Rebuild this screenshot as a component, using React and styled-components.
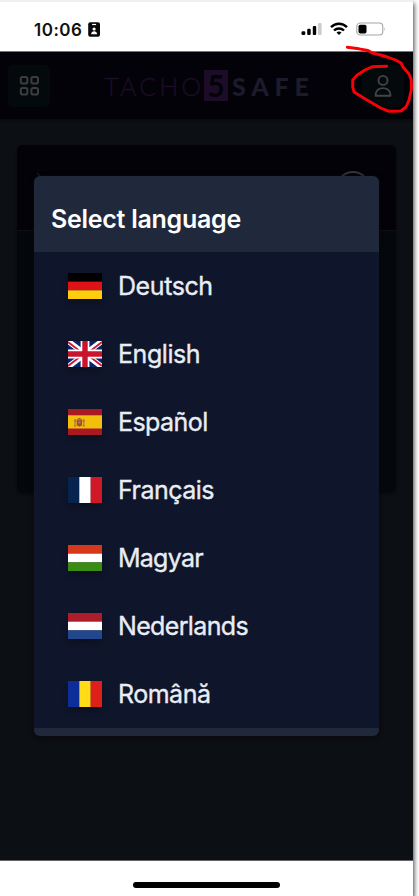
import React from "react";
import styled, { createGlobalStyle } from "styled-components";

const GlobalStyle = createGlobalStyle`
  * { box-sizing: border-box; }
  body { margin: 0; background: #fff; font-family: Inter, "Liberation Sans", sans-serif; overflow: hidden; }
  svg { display: block; }
`;

const Page = styled.div`
  position: relative;
  width: 419px;
  height: 896px;
  background: #fff;
  overflow: hidden;
`;

const Phone = styled.div`
  display: flex;
  flex-direction: column;
  width: 413px;
  height: 896px;
  background: #fff;
  overflow: hidden;
  box-shadow: 1px 3px 5px rgba(0, 0, 0, 0.75);
`;

const StatusBar = styled.div`
  display: flex;
  align-items: flex-start;
  flex: none;
  height: 52px;
  padding: 20px 27px 0 34px;
  border-top: 2px solid #f0f0f0;
  border-bottom: 1px solid #77777b;
`;

const Clock = styled.span`
  width: 54px;
  font-size: 17px;
  font-weight: 600;
  line-height: 16px;
  letter-spacing: 0.5px;
  color: #111;
  white-space: nowrap;
`;

const Indicators = styled.div`
  display: flex;
  align-items: flex-start;
  gap: 8px;
  margin-left: auto;
`;

const Header = styled.header`
  display: flex;
  align-items: center;
  justify-content: space-between;
  flex: none;
  height: 67px;
  padding: 0 9px 0 8px;
  background: #030208;
`;

const IconButton = styled.div`
  display: flex;
  align-items: center;
  justify-content: center;
  width: 42px;
  height: 42px;
  border-radius: 5px;
  background: #04090c;
`;

const Logo = styled.div`
  display: flex;
  align-items: center;
  width: 208px;
  height: 32px;
  margin-right: -4px;
  font-family: Lato, sans-serif;
  font-size: 25px;
  line-height: 32px;
`;

const LogoThin = styled.span`
  flex: none;
  width: 100px;
  font-weight: 300;
  letter-spacing: 3.2px;
  color: #1c0c26;
  -webkit-text-stroke: 0.4px #1c0c26;
  white-space: nowrap;
`;

const LogoDigit = styled.span`
  flex: none;
  width: 24px;
  height: 31px;
  background: #1d0c28;
  color: #030208;
  font-size: 30px;
  font-weight: 700;
  line-height: 31px;
  text-align: center;
`;

const LogoBold = styled.span`
  padding-left: 4px;
  font-weight: 900;
  letter-spacing: 5.8px;
  color: #1b1b2b;
  white-space: nowrap;
`;

const Content = styled.main`
  display: flex;
  flex-direction: column;
  flex: none;
  height: 742px;
  padding: 26px 17px 0;
  background: #0c0f13;
  border-bottom: 1px solid #65646a;
  box-shadow: inset 0 4px 3px -3px #07080b;
`;

const Card = styled.section`
  height: 348px;
  border-radius: 6px;
  background: #04080b;
  box-shadow: 0 1px 3px #0a090f;
`;

const CardHeader = styled.div`
  display: flex;
  justify-content: space-between;
  height: 86px;
  padding: 26px 26px 0 19px;
  border-radius: 6px 6px 0 0;
  border-bottom: 1px solid #0d0d13;
  background: #030208;
`;

const Dialog = styled.section`
  position: absolute;
  left: 34px;
  top: 176px;
  width: 345px;
  height: 560px;
  border-radius: 6px;
  overflow: hidden;
  background: #20293b;
  box-shadow: 0 1px 5px #09080e;
`;

const DialogTitle = styled.h1`
  display: flex;
  align-items: center;
  height: 76px;
  margin: 0;
  padding: 10px 0 0 17px;
  font-size: 25px;
  font-weight: 600;
  letter-spacing: -0.27px;
  color: #fff;
  white-space: nowrap;
`;

const LanguageList = styled.ul`
  margin: 0;
  padding: 0;
  list-style: none;
  background: #0f152a;
`;

const LanguageRow = styled.li`
  display: flex;
  align-items: center;
  gap: 16px;
  height: 68px;
  padding-left: 34px;
`;

const Flag = styled.svg`
  flex: none;
  width: 34px;
  height: 26px;
  box-shadow: 0 4px 6px -1px rgba(0, 0, 0, 0.3);
`;

const LanguageName = styled.span`
  font-size: 25px;
  line-height: 30px;
  letter-spacing: ${(p) => p.$tracking}px;
  color: #e9edf4;
  -webkit-text-stroke: 0.35px #e9edf4;
  white-space: nowrap;
`;

const HomeArea = styled.footer`
  display: flex;
  justify-content: center;
  padding-top: 21px;
`;

const HomeIndicator = styled.div`
  width: 147px;
  height: 6px;
  border-radius: 3px;
  background: #000;
`;

const Annotation = styled.svg`
  position: absolute;
  left: 340px;
  top: 40px;
`;

const Stripes = ({ colors, vertical }) =>
  colors.map((c, i) => (
    <rect
      key={c}
      x={vertical ? (i * 34) / 3 : 0}
      y={vertical ? 0 : (i * 26) / 3}
      width={vertical ? 34 / 3 + 0.1 : 34}
      height={vertical ? 26 : 26 / 3 + 0.1}
      fill={c}
    />
  ));

const UnionJack = () => (
  <>
    <rect width="34" height="26" fill="#06256b" />
    <path d="M0 0L34 26M34 0L0 26" stroke="#fff" strokeWidth="5.4" />
    <path d="M0 1L15 12.5M19 13.5L34 25M34 1L19 12.5M15 13.5L0 25" stroke="#cc1a38" strokeWidth="1.8" />
    <path d="M17 0V26M0 13H34" stroke="#fff" strokeWidth="8.8" />
    <path d="M17 0V26M0 13H34" stroke="#c8142f" strokeWidth="5.4" />
  </>
);

const SpanishFlag = () => (
  <>
    <rect width="34" height="26" fill="#aa1822" />
    <rect y="6.3" width="34" height="13.2" fill="#f1c00c" />
    <path d="M7 10v7M15.8 10v7" stroke="#aa7d42" strokeWidth="1.2" />
    <path d="M8.7 10.5q2.7-3 5.4 0v5.4q-2.7 3-5.4 0z" fill="#ad4824" />
    <path d="M6.2 12h2.3M14.4 12h2.3M6.2 17h2M14.6 17h2" stroke="#aa5b31" />
    <circle cx="11.4" cy="13.4" r="1.3" fill="#8f7893" />
    <path d="M9.2 10.8h4.4" stroke="#c5893b" />
  </>
);

const languages = [
  { name: "Deutsch", tracking: -0.42, art: <Stripes colors={["#000", "#dd1317", "#ffcc0e"]} /> },
  { name: "English", tracking: -0.45, art: <UnionJack /> },
  { name: "Español", tracking: -0.55, art: <SpanishFlag /> },
  { name: "Français", tracking: -0.5, art: <Stripes vertical colors={["#072350", "#fff", "#d01827"]} /> },
  { name: "Magyar", tracking: -0.75, art: <Stripes colors={["#d7371b", "#fff", "#3b8c15"]} /> },
  { name: "Nederlands", tracking: -0.65, art: <Stripes colors={["#ad1d29", "#fff", "#23478d"]} /> },
  { name: "Română", tracking: -0.5, art: <Stripes vertical colors={["#0d2d98", "#ffdc17", "#de201a"]} /> },
];

const BadgeIcon = () => (
  <svg width="13" height="16" viewBox="0 0 13 16">
    <rect x="0.2" y="0.3" width="11.8" height="14.4" rx="2" fill="#080808" />
    <path d="M4.1 2.5h4" stroke="#fff" strokeWidth="1.2" />
    <circle cx="6.1" cy="7" r="1.6" fill="#fff" />
    <path d="M3.1 12.2c0-4 6-4 6 0z" fill="#fff" />
  </svg>
);

const SignalIcon = () => (
  <svg width="21" height="14" viewBox="0 0 21 14">
    <rect x="0.5" y="9.2" width="3.8" height="3.8" rx="1.2" fill="#000" />
    <rect x="6.2" y="6.8" width="3.5" height="6.2" rx="1.1" fill="#000" />
    <rect x="11.8" y="4" width="3.4" height="9" rx="1.1" fill="#000" />
    <rect x="17" y="1" width="3.6" height="12" rx="1.1" fill="#ccc" />
  </svg>
);

const WifiIcon = () => (
  <svg width="18" height="14" viewBox="0 0 18 14" fill="none" stroke="#000" strokeWidth="2.4">
    <path d="M1 5.2C5.5 0.6 12.5 0.6 17 5.2" />
    <path d="M4 8.5C6.8 5.8 11.2 5.8 14 8.5" />
    <path d="M6.5 10.6Q9 8.6 11.5 10.6L9 13Z" fill="#000" stroke="none" />
  </svg>
);

const BatteryIcon = () => (
  <svg width="30" height="14" viewBox="0 0 30 14">
    <rect x="0.8" y="1" width="26" height="12" rx="3.5" fill="#fff" stroke="#a5a5a5" strokeWidth="1.1" />
    <rect x="2.5" y="2.7" width="8" height="8.8" rx="1.8" fill="#000" />
    <path d="M28.2 5.4v3.4q1.5-1.7 0-3.4" fill="#a5a5a5" />
  </svg>
);

const GridIcon = () => (
  <svg width="20" height="21" viewBox="0 0 20 21" fill="none" stroke="#3c3d3f" strokeWidth="2">
    <rect x="1.8" y="2" width="6.6" height="6.6" rx="1.8" />
    <rect x="12.4" y="2" width="6.6" height="6.6" rx="1.8" />
    <rect x="1.8" y="12.9" width="6.6" height="6.6" rx="1.8" />
    <rect x="12.4" y="12.9" width="6.6" height="6.6" rx="1.8" />
  </svg>
);

const UserIcon = () => (
  <svg width="18" height="24" viewBox="0 0 18 24" fill="none" stroke="#434447" strokeWidth="1.9">
    <circle cx="9" cy="6.4" r="4.5" />
    <path d="M1.6 21.8V20.5C1.6 12 16.4 12 16.4 20.5v1.3z" strokeLinejoin="round" />
  </svg>
);

export default function App() {
  return (
    <Page>
      <GlobalStyle />
      <Phone>
        <StatusBar>
          <Clock>10:06</Clock>
          <BadgeIcon />
          <Indicators>
            <SignalIcon />
            <WifiIcon />
            <BatteryIcon />
          </Indicators>
        </StatusBar>
        <Header>
          <IconButton><GridIcon /></IconButton>
          <Logo>
            <LogoThin>TACHO</LogoThin>
            <LogoDigit>5</LogoDigit>
            <LogoBold>SAFE</LogoBold>
          </Logo>
          <IconButton><UserIcon /></IconButton>
        </Header>
        <Content>
          <Card>
            <CardHeader>
              <svg width="7" height="12" fill="none" stroke="#191a20" strokeWidth="1.3">
                <path d="M1 2l4 4-4 4" />
              </svg>
              <svg width="34" height="34" fill="none" stroke="#34363a" strokeWidth="1.9">
                <circle cx="17" cy="17" r="16" />
              </svg>
            </CardHeader>
          </Card>
        </Content>
        <HomeArea><HomeIndicator /></HomeArea>
      </Phone>
      <Dialog>
        <DialogTitle>Select language</DialogTitle>
        <LanguageList>
          {languages.map(({ name, tracking, art }) => (
            <LanguageRow key={name}>
              <Flag viewBox="0 0 34 26">{art}</Flag>
              <LanguageName $tracking={tracking}>{name}</LanguageName>
            </LanguageRow>
          ))}
        </LanguageList>
      </Dialog>
      <Annotation width="79" height="80" viewBox="340 40 79 80" fill="none">
        <path
          d="M347.3 47.3L359 48.8L368 50.5L372.3 53L380.7 55L387.3 57L395.7 60L401 63L403 67L409 74L411.3 80L411.3 90L409 100L406 107L401 111L389 111.3L380.7 108L365.7 99.3L354 92L352.7 87L352.7 80L357.3 75L365 70L372.3 66.7L386.7 66.3"
          stroke="#f90006"
          strokeWidth="2.9"
          strokeLinecap="round"
          strokeLinejoin="round"
        />
      </Annotation>
    </Page>
  );
}
